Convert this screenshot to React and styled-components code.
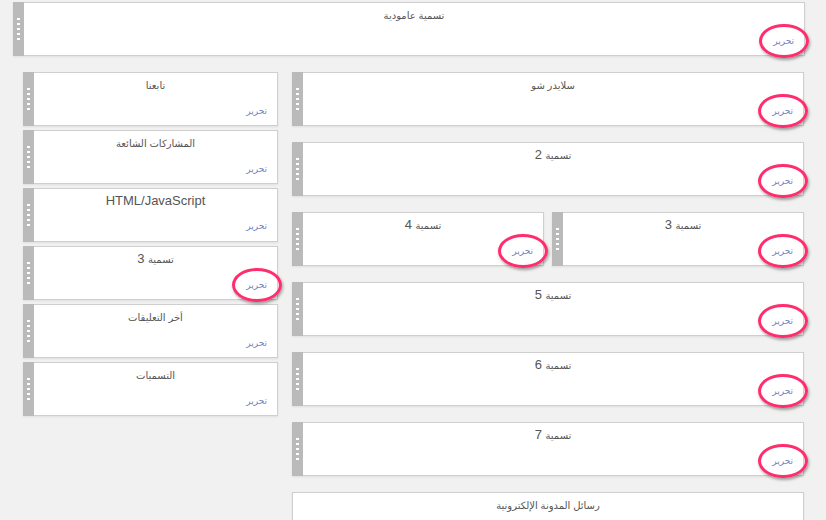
import React from "react";
import styled, { createGlobalStyle } from "styled-components";

const GlobalStyle = createGlobalStyle`
    body {
        margin: 0;
        background: #f1f1f1;
        font-family: Arial, "Liberation Sans", "DejaVu Sans", sans-serif;
        overflow: hidden;
    }
`;

const Page = styled.div`
    width: 826px;
    height: 520px;
    padding-top: 2px;
    box-sizing: border-box;
    overflow: hidden;
`;

const Header = styled.div`
    margin-left: 13px;
    width: 792px;
`;

const Columns = styled.div`
    display: flex;
    gap: 14px;
    margin: 16px 0 0 23px;
`;

const Sidebar = styled.div`
    width: 255px;
    display: flex;
    flex-direction: column;
    gap: 4px;
`;

const Main = styled.div`
    width: 512px;
    display: flex;
    flex-direction: column;
    gap: 16px;
`;

const Pair = styled.div`
    display: flex;
    gap: 8px;
    > * {
        flex: 1;
    }
`;

const Box = styled.div`
    display: flex;
    height: 54px;
    flex-shrink: 0;
    box-sizing: border-box;
    background: #fff;
    border: 1px solid #cfcfcf;
    box-shadow: 0 1px 2px rgba(0, 0, 0, 0.08);
`;

const Handle = styled.div`
    width: 11px;
    flex-shrink: 0;
    margin: -1px 0 -1px -1px;
    background: #bababa;
    display: flex;
    flex-direction: column;
    align-items: center;
    justify-content: center;
    gap: 3px;

    span {
        display: block;
        width: 3px;
        height: 2px;
        background: #fff;
    }
`;

const Body = styled.div`
    flex: 1;
    display: flex;
    flex-direction: column;
    padding: 4px 10px 0;
    min-width: 0;
`;

const Title = styled.div`
    text-align: center;
    font-size: 13px;
    color: #555;
    line-height: 16px;
`;

// arabic glyphs come from DejaVu, which runs wide, so they get a smaller size
const Ar = styled.span`
    font-size: 10px;
`;

const EditRow = styled.div`
    display: flex;
    justify-content: flex-end;
    margin-top: 11px;
`;

const Edit = styled.a`
    position: relative;
    font-size: 9px;
    color: #6f7fbf;
    line-height: 12px;
    cursor: pointer;
`;

const Ring = styled.i`
    position: absolute;
    left: 50%;
    top: 50%;
    width: 44px;
    height: 28px;
    margin: -17px 0 0 -25px;
    border: 3px solid #ff2d6d;
    border-radius: 50%;
    box-shadow: 1px 2px 3px rgba(0, 0, 0, 0.35);
`;

function Label({ text }) {
    const parts = text.split(/(\s*[0-9A-Za-z/]+)/).filter(Boolean);
    return parts.map((p, i) =>
        /[0-9A-Za-z]/.test(p) ? <span key={i}>{p}</span> : <Ar key={i}>{p}</Ar>
    );
}

function Widget({ title, marked, draggable = true }) {
    return (
        <Box>
            {draggable && (
                <Handle>
                    <span /><span /><span /><span /><span />
                </Handle>
            )}
            <Body>
                <Title dir="rtl"><Label text={title} /></Title>
                {draggable && (
                    <EditRow>
                        <Edit>
                            تحرير
                            {marked && <Ring />}
                        </Edit>
                    </EditRow>
                )}
            </Body>
        </Box>
    );
}

const sidebar = [
    { title: "تابعنا" },
    { title: "المشاركات الشائعة" },
    { title: "HTML/JavaScript" },
    { title: "تسمية 3", marked: true },
    { title: "أخر التعليقات" },
    { title: "التسميات" },
];

export default function App() {
    return (
        <Page>
            <GlobalStyle />
            <Header>
                <Widget title="تسمية عامودية" marked />
            </Header>
            <Columns>
                <Sidebar>
                    {sidebar.map(w => <Widget key={w.title} {...w} />)}
                </Sidebar>
                <Main>
                    <Widget title="سلايدر شو" marked />
                    <Widget title="تسمية 2" marked />
                    <Pair>
                        <Widget title="تسمية 4" marked />
                        <Widget title="تسمية 3" marked />
                    </Pair>
                    <Widget title="تسمية 5" marked />
                    <Widget title="تسمية 6" marked />
                    <Widget title="تسمية 7" marked />
                    <Widget title="رسائل المدونة الإلكترونية" draggable={false} />
                </Main>
            </Columns>
        </Page>
    );
}
